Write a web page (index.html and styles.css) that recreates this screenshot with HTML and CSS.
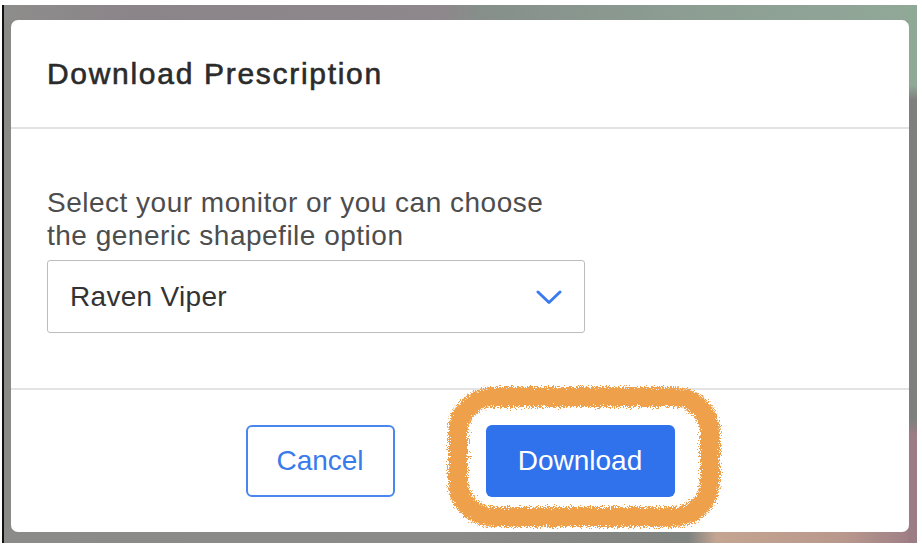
FILE: index.html
```html
<!DOCTYPE html>
<html lang="en">
<head>
    <meta charset="UTF-8">
    <meta name="viewport" content="width=device-width, initial-scale=1.0">
    <title>Download Prescription</title>
    <link rel="stylesheet" href="styles.css">
</head>
<body>
    <div class="backdrop">
        <div class="modal">
            <div class="modal-header">
                <h1>Download Prescription</h1>
            </div>
            <div class="modal-body">
                <p class="hint">Select your monitor or you can choose<br>the generic shapefile option</p>
                <div class="select-box">
                    <span>Raven Viper</span>
                    <svg class="chevron" width="26" height="15" viewBox="0 0 26 15">
                        <path d="M2 2 L13 12.5 L24 2" fill="none" stroke="#3b7cee" stroke-width="3" stroke-linecap="round" stroke-linejoin="round"/>
                    </svg>
                </div>
            </div>
            <div class="modal-footer">
                <button class="btn btn-cancel" type="button">Cancel</button>
                <span class="highlight-wrap">
                    <button class="btn btn-download" type="button">Download</button>
                    <!-- hand drawn marker around the button -->
                    <svg class="marker" width="277" height="145" viewBox="0 0 277 145">
                        <defs>
                            <filter id="rough" x="-10%" y="-10%" width="120%" height="120%">
                                <feTurbulence type="fractalNoise" baseFrequency="1.3" numOctaves="3" seed="5" result="noise"/>
                                <feDisplacementMap in="SourceGraphic" in2="noise" scale="11" xChannelSelector="R" yChannelSelector="G" result="moved"/>
                                <feGaussianBlur in="moved" stdDeviation="0.6"/>
                            </filter>
                        </defs>
                        <rect x="12" y="12" width="252" height="120" rx="36" fill="none" stroke="#efa04b" stroke-width="20" filter="url(#rough)"/>
                    </svg>
                </span>
            </div>
        </div>
    </div>
</body>
</html>
```

FILE: styles.css
```css
body {
    margin: 0;
    padding: 5px 5px 7px 2px;
    background-color: white;
    font-family: "Liberation Sans", Arial, Helvetica, sans-serif;
}
.backdrop {
    border-left: 2px solid #111;
    padding: 15px 8px 11px 7px;
    background:
        linear-gradient(to bottom, #8fa997 0, #8fa997 80px, #7e807e 95px, #7e807e 415px, #9c7c85 430px, #9c7c85 100%) right top / 9px 100% no-repeat,
        linear-gradient(to right, #8d8d8b 0, #8b8489 15%, #8e878b 48%, #868f8a 52%, #8c9c92 72%, #91a898 100%) left top / 100% 16px no-repeat,
        linear-gradient(to right, #8b8b89 0, #8a8a88 50%, #7f8380 75%, #c4a591 78%, #b8988c 92%, #9c7c85 100%) left bottom / 100% 12px no-repeat,
        #8a8a88;
}
.modal {
    display: flex;
    flex-direction: column;
    height: 512px;
    background-color: white;
    border-radius: 7px;
}
.modal-header {
    display: flex;
    align-items: center;
    height: 107px;
    padding: 0 36px;
    border-bottom: 2px solid #e3e3e3;
}
.modal-header h1 {
    margin: 0;
    font-size: 30px;
    font-weight: normal;
    letter-spacing: 1.7px;
    -webkit-text-stroke: 0.6px #2b2b2b;
    color: #2b2b2b;
}
.modal-body {
    padding: 57px 36px 0;
    height: 202px;
    border-bottom: 2px solid #e3e3e3;
}
.hint {
    margin: 0 0 8px;
    font-size: 28px;
    line-height: 33px;
    letter-spacing: 0.5px;
    color: #4d4d4d;
}
.select-box {
    display: flex;
    justify-content: space-between;
    align-items: center;
    width: 538px;
    height: 73px;
    padding: 0 22px;
    box-sizing: border-box;
    border: 1.5px solid #bdbdbd;
    border-radius: 3px;
    font-size: 28px;
    letter-spacing: 0.3px;
    color: #333;
}
.chevron {
    margin-top: 2px;
}
.modal-footer {
    display: flex;
    justify-content: center;
    align-items: center;
    gap: 91px;
    flex: 1;
}
.btn {
    height: 72px;
    font-family: inherit;
    font-size: 28px;
    border-radius: 6px;
    cursor: pointer;
}
.btn-cancel {
    width: 149px;
    background-color: white;
    color: #3a7bec;
    border: 2px solid #4a86ef;
}
.btn-download {
    width: 189px;
    background-color: #3071ec;
    color: white;
    border: none;
}
.highlight-wrap {
    position: relative;
    display: inline-block;
}
.marker {
    position: absolute;
    left: -40px;
    top: -40px;
    pointer-events: none;
}
```
